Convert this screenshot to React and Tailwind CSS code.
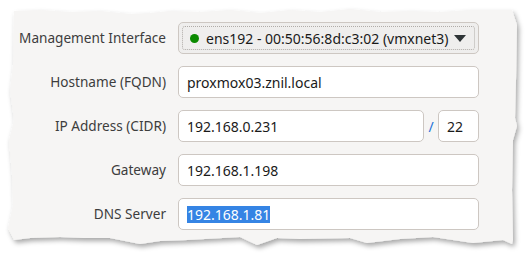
const PAPER =
  "14,11 40,10 70,12 100,11 130,14 150,13 170,11 200,12 230,10 260,13 290,10 320,12 350,9 380,12 410,11 440,12 470,10 500,10 512,10 " +
  "517,25 516,80 515,118 517,126 513,140 512,190 513,240 512,244 " +
  "503,240 473,243 433,237 400,239 367,243 350,238 300,239 277,238 257,245 240,237 187,240 160,241 140,244 110,238 83,238 60,237 30,238 14,240 " +
  "8,228 13,205 12,175 9,140 14,120 10,90 13,65";

const Label = ({ children }) => (
  <div className="flex items-center justify-end h-[32px] text-[13.6px] text-[#3d3d3d]">{children}</div>
);

const Field = ({ children, className = "" }) => (
  <div
    className={`flex items-center h-[32px] bg-white border border-[#cdc7c2] rounded-[5px] px-[8px] text-[14px] text-[#1a1a1a] ${className}`}
  >
    {children}
  </div>
);

export default function App() {
  return (
    <div className="relative w-[531px] h-[257px] bg-white overflow-hidden" style={{ fontFamily: '"Noto Sans", "DejaVu Sans", sans-serif' }}>
      {/* torn paper background */}
      <svg className="absolute inset-0" width="531" height="257">
        <defs>
          <filter id="shadow" x="-10%" y="-10%" width="120%" height="130%">
            <feDropShadow dx="2" dy="3" stdDeviation="2.5" floodColor="#000" floodOpacity="0.35" />
          </filter>
        </defs>
        <polygon points={PAPER} fill="#f6f5f4" filter="url(#shadow)" />
      </svg>

      <div className="relative grid grid-cols-[166px_301px] gap-x-[12px] gap-y-[12px] pt-[22px]">
        <Label>Management Interface</Label>
        <div className="relative flex items-center h-[32px] border border-[#cdc7c2] rounded-[5px] bg-[#efeeed] px-[11px] text-[14px] text-[#1a1a1a]">
          <div className="absolute inset-[3px] border border-dotted border-[#b0aca8] rounded-[3px]" />
          <span className="w-[9px] h-[9px] rounded-full bg-[#0b8a00] mr-[7px]" />
          <span>ens192 - 00:50:56:8d:c3:02 (vmxnet3)</span>
          <svg className="ml-[5px]" width="12" height="7" viewBox="0 0 12 7">
            <polygon points="0,0 12,0 6,7" fill="#2e3436" />
          </svg>
        </div>

        <Label>Hostname (FQDN)</Label>
        <Field>proxmox03.znil.local</Field>

        <Label>IP Address (CIDR)</Label>
        <div className="flex items-center">
          <Field className="w-[246px]">192.168.0.231</Field>
          <span className="w-[14px] text-center text-[14px] text-[#1c71d8]">/</span>
          <Field className="w-[41px]">22</Field>
        </div>

        <Label>Gateway</Label>
        <Field>192.168.1.198</Field>

        <Label>DNS Server</Label>
        <Field>
          <span className="bg-[#3584e4] text-white leading-[17px]">192.168.1.81</span>
        </Field>
      </div>
    </div>
  );
}
